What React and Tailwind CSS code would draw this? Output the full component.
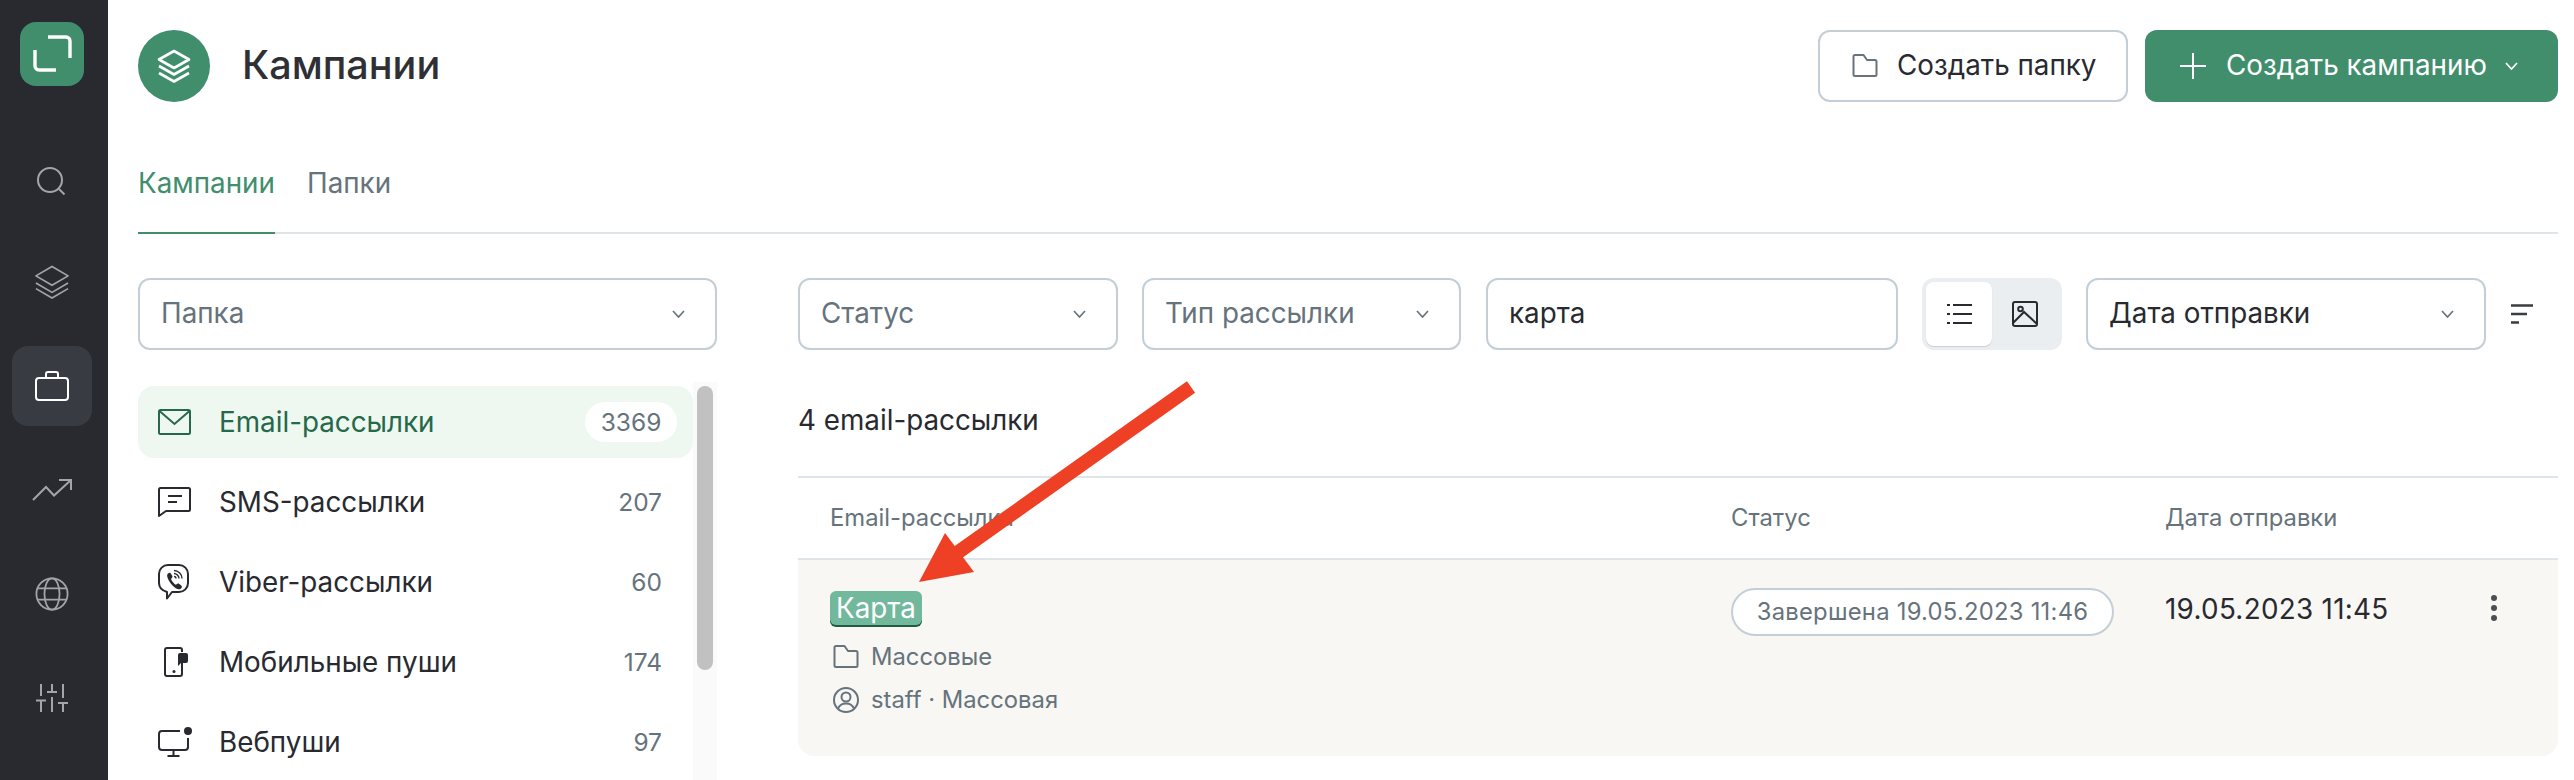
import React from "react";

const Chevron = ({ className = "text-[#66737c]" }) => (
  <svg width="13" height="8" viewBox="0 0 13 8" fill="none" stroke="currentColor" strokeWidth="1.700" className={className}>
    <path d="M1 1l5.500 6L12 1" />
  </svg>
);

const FolderIcon = ({ size = 26, className }) => (
  <svg width={size} height={size} viewBox="0 0 26 26" fill="none" stroke="currentColor" strokeWidth="2" strokeLinejoin="round" className={className}>
    <path d="M1.500 3.500a1.500 1.500 0 0 1 1.500-1.500h8.500l3.500 5h8a1.500 1.500 0 0 1 1.500 1.500v13a1.500 1.500 0 0 1-1.500 1.500H3a1.500 1.500 0 0 1-1.500-1.500z" />
  </svg>
);

const LayersBold = () => (
  <svg width="36" height="36" viewBox="0 0 36 36" fill="none" stroke="#fff" strokeWidth="2.600" strokeLinejoin="round">
    <path d="M18 3 33 11.500 18 20 3 11.500z" />
    <path d="M3 18l15 8.500L33 18" />
    <path d="M3 25l15 8.500L33 25" />
  </svg>
);

const NavSearch = () => (
  <svg width="30" height="30" viewBox="0 0 30 30" fill="none" stroke="currentColor" strokeWidth="2" className="mt-[4px]">
    <circle cx="13" cy="15" r="12" />
    <path d="M22 24l5.500 5.500" />
  </svg>
);
const NavLayers = () => (
  <svg width="36" height="34" viewBox="0 0 38 36" fill="none" stroke="currentColor" strokeWidth="1.800" strokeLinejoin="round">
    <path d="M19 1.500 36 11.500 19 21.500 2 11.500z" />
    <path d="M2 19l17 10 17-10" />
    <path d="M2 25l17 10 17-10" />
  </svg>
);
const NavBag = () => (
  <svg width="34" height="30" viewBox="0 0 34 30" fill="none" stroke="currentColor" strokeWidth="2">
    <rect x="1" y="7" width="32" height="22" rx="3" />
    <path d="M11 7V3a2 2 0 0 1 2-2h8a2 2 0 0 1 2 2v4" />
  </svg>
);
const NavTrend = () => (
  <svg width="40" height="24" viewBox="0 0 40 24" fill="none" stroke="currentColor" strokeWidth="2">
    <path d="M1 22 14 9l8 8.500L39 2" />
    <path d="M27 2h12v10" />
  </svg>
);
const NavGlobe = () => (
  <svg width="34" height="34" viewBox="0 0 36 36" fill="none" stroke="currentColor" strokeWidth="1.900">
    <circle cx="18" cy="18" r="16.500" />
    <ellipse cx="18" cy="18" rx="8" ry="16.500" />
    <path d="M3 12h30M3 24h30" />
  </svg>
);
const NavSliders = () => (
  <svg width="34" height="30" viewBox="0 0 34 30" fill="none" stroke="currentColor" strokeWidth="2">
    <path d="M6 1v12M1 17.500h10M6 17.500V29" />
    <path d="M17 1v8M12 9h10M17 14v15" />
    <path d="M28 1v14M23 20h10M28 20v9" />
  </svg>
);

const MailIcon = () => (
  <svg width="33" height="26" viewBox="0 0 33 26" fill="none" stroke="currentColor" strokeWidth="2">
    <rect x="1" y="1" width="31" height="24" rx="1.500" />
    <path d="M1.500 2 16.500 15 31.500 2" />
  </svg>
);
const SmsIcon = () => (
  <svg width="33" height="30" viewBox="0 0 33 30" fill="none" stroke="currentColor" strokeWidth="2" strokeLinejoin="round">
    <path d="M1 2.500A1.500 1.500 0 0 1 2.500 1h28A1.500 1.500 0 0 1 32 2.500v20a1.500 1.500 0 0 1-1.500 1.500H8L1 29z" />
    <path d="M10 9h14M10 15h9" />
  </svg>
);
const ViberIcon = () => (
  <svg width="32" height="36" viewBox="0 0 32 36" fill="none" stroke="currentColor" strokeWidth="2" strokeLinejoin="round">
    <path d="M10 1h11c5 0 9 4 9 9v9c0 5-4 9-9 9h-7l-5 6.500V28C4 26.500 1 23 1 19v-9c0-5 4-9 9-9z" />
    <path d="M10 9.500c1-1 2.300-1 2.900 0l1.400 2.500c.5 1 0 1.800-1 2.500-.5.500 0 1.500 1.500 3.500s3 3 3.500 2.500c1-1 2-1.300 3-.5l2 1.500c1 1 .5 2.500-.5 3.200-2 1.300-5 .5-8.500-3.500S7.500 11.500 10 9.500z" fill="currentColor" stroke="none" />
    <path d="M16 6.500c4 0 8 3.500 8 8M16 9.500c2.500 0 5 2.300 5 5M16 12.500c1 0 2 1 2 2" strokeWidth="1.400" />
  </svg>
);
const PushIcon = () => (
  <svg width="31" height="30" viewBox="0 0 31 30" fill="none" stroke="currentColor" strokeWidth="2">
    <path d="M24 5V3a2 2 0 0 0-2-2H9a2 2 0 0 0-2 2v24a2 2 0 0 0 2 2h13a2 2 0 0 0 2-2V16" />
    <circle cx="16" cy="24.500" r="1.500" fill="currentColor" stroke="none" />
    <path d="M20 8a2 2 0 0 1 2-2h6a2 2 0 0 1 2 2v6a2 2 0 0 1-2 2h-5l-3 3z" fill="currentColor" stroke="none" />
  </svg>
);
const WebPushIcon = () => (
  <svg width="35" height="30" viewBox="0 0 35 30" fill="none" stroke="currentColor" strokeWidth="2">
    <path d="M22 4H4a3 3 0 0 0-3 3v13a3 3 0 0 0 3 3h23a3 3 0 0 0 3-3V11" />
    <path d="M15.500 23v5M9.500 29h12" />
    <circle cx="30" cy="4" r="4" fill="currentColor" stroke="none" />
  </svg>
);

const Select = ({ label, className, dark }) => (
  <div className={`h-[72px] shrink-0 rounded-[12px] border-2 border-[#c3ced6] bg-white flex items-center justify-between pl-[21px] pr-[30px] ${className}`}>
    <span className={`text-[27.8px] leading-none ${dark ? "text-[#282a30]" : "text-[#66737c]"}`}>{label}</span>
    <Chevron />
  </div>
);

const channels = [
  { icon: <MailIcon />, label: "Email-рассылки", count: "3369", active: true },
  { icon: <SmsIcon />, label: "SMS-рассылки", count: "207" },
  { icon: <ViberIcon />, label: "Viber-рассылки", count: "60" },
  { icon: <PushIcon />, label: "Мобильные пуши", count: "174" },
  { icon: <WebPushIcon />, label: "Вебпуши", count: "97" },
];

const ChannelRow = ({ icon, label, count, active }) => (
  <div className={`h-[72px] mb-[8px] shrink-0 rounded-[16px] flex items-center pl-[20px] pr-[16px] ${active ? "bg-[#eef8f1] text-[#26694a]" : "text-[#282a30]"}`}>
    <span className="w-[35px] flex justify-start shrink-0">{icon}</span>
    <span className="ml-[26px] mt-[1px] text-[27.8px] leading-none">{label}</span>
    {active ? (
      <span className="ml-auto h-[40px] w-[92px] rounded-full bg-white flex items-center justify-center text-[24.500px] leading-none text-[#66737c]">{count}</span>
    ) : (
      <span className="ml-auto pr-[15px] text-[24.500px] leading-none text-[#66737c]">{count}</span>
    )}
  </div>
);

export default function App() {
  return (
    <div className="relative w-[2574px] h-[780px] overflow-hidden bg-white flex font-['Inter',sans-serif]">
      <aside className="w-[108px] shrink-0 bg-[#282a30] flex flex-col items-start text-[#a2a5aa]">
        <div className="mt-[22px] ml-[20px] w-[64px] h-[64px] rounded-[16px] bg-[#418e6d]">
          <svg width="64" height="64" viewBox="0 0 64 64" fill="none" stroke="#fff" strokeWidth="3.400">
            <path d="M28 15h18a4 4 0 0 1 4 4v17" />
            <path d="M15 28v16a4 4 0 0 0 4 4h17" />
          </svg>
        </div>
        <div className="mt-[52px] ml-[12px] flex flex-col gap-[24px]">
          <div className="w-[80px] h-[80px] flex items-center justify-center"><NavSearch /></div>
          <div className="w-[80px] h-[80px] flex items-center justify-center"><NavLayers /></div>
          <div className="w-[80px] h-[80px] flex items-center justify-center rounded-[16px] bg-[#383b42] text-white"><NavBag /></div>
          <div className="w-[80px] h-[80px] flex items-center justify-center"><NavTrend /></div>
          <div className="w-[80px] h-[80px] flex items-center justify-center"><NavGlobe /></div>
          <div className="w-[80px] h-[80px] flex items-center justify-center"><NavSliders /></div>
        </div>
      </aside>

      <main className="flex-1 min-w-0 pl-[30px] pr-[16px] pt-[30px] flex flex-col">
        <header className="h-[72px] flex items-center justify-between shrink-0">
          <div className="flex items-center">
            <div className="w-[72px] h-[72px] rounded-full bg-[#418e6d] flex items-center justify-center"><LayersBold /></div>
            <h1 className="ml-[32px] text-[39.600px] leading-none font-medium text-[#2f3034]">Кампании</h1>
          </div>
          <div className="flex gap-[17px]">
            <div className="h-[72px] w-[310px] rounded-[12px] border-2 border-[#c3ced6] bg-white flex items-center pl-[32px] text-[#282a30]">
              <FolderIcon className="text-[#66737c]" />
              <span className="ml-[19px] text-[27.8px] leading-none">Создать папку</span>
            </div>
            <div className="h-[72px] w-[413px] rounded-[12px] bg-[#418e6d] flex items-center pl-[35px] text-white">
              <svg width="26" height="26" viewBox="0 0 26 26" stroke="currentColor" strokeWidth="2"><path d="M13 0v26M0 13h26" /></svg>
              <span className="ml-[20px] text-[27.8px] leading-none">Создать кампанию</span>
              <Chevron className="ml-[18px] text-white" />
            </div>
          </div>
        </header>

        <nav className="mt-[46px] h-[86px] border-b-2 border-[#dfe4e8] flex shrink-0 gap-[32px]">
          <div className="h-[86px] w-[137px] border-b-2 border-[#418e6d] text-[#418e6d] text-[27.8px] leading-[70px]">Кампании</div>
          <div className="text-[#66737c] text-[27.8px] leading-[70px]">Папки</div>
        </nav>

        <div className="mt-[44px] flex flex-1 min-h-0">
          <section className="w-[579px] shrink-0 flex flex-col">
            <Select label="Папка" className="w-[579px]" />
            <div className="mt-[36px] flex flex-1 min-h-0">
              <div className="w-[555px] shrink-0 flex flex-col overflow-hidden">
                {channels.map((c) => <ChannelRow key={c.label} {...c} />)}
              </div>
              <div className="w-[24px] bg-[#fafafa] flex justify-center -mt-[4px] pt-[4px]">
                <div className="w-[16px] h-[284px] rounded-full bg-[#c1c1c1]" />
              </div>
            </div>
          </section>

          <section className="ml-[81px] flex-1 min-w-0 flex flex-col">
            <div className="flex items-center">
              <Select label="Статус" className="w-[320px]" />
              <Select label="Тип рассылки" className="w-[319px] ml-[24px]" />
              <div className="h-[72px] w-[412px] ml-[25px] rounded-[12px] border-2 border-[#c3ced6] flex items-center pl-[21px] text-[27.8px] leading-none text-[#282a30]">карта</div>
              <div className="h-[72px] w-[140px] ml-[24px] rounded-[12px] bg-[#ebeef0] flex items-center p-[4px]">
                <div className="w-[66px] h-[64px] rounded-[8px] bg-white shadow-[0_1px_1px_#c9cfd4] flex items-center justify-center text-[#282a30]">
                  <svg width="25" height="22" viewBox="0 0 25 22" fill="none" stroke="currentColor" strokeWidth="2">
                    <path d="M6 2h19M6 11h19M6 20h19M0 2h3M0 11h3M0 20h3" />
                  </svg>
                </div>
                <div className="w-[66px] h-[64px] flex items-center justify-center text-[#282a30]">
                  <svg width="26" height="26" viewBox="0 0 26 26" fill="none" stroke="currentColor" strokeWidth="2">
                    <rect x="1" y="1" width="24" height="24" rx="2" />
                    <circle cx="8.500" cy="8" r="2.300" />
                    <path d="M1 22 12 11l13 12" />
                  </svg>
                </div>
              </div>
              <Select label="Дата отправки" dark className="w-[400px] ml-[24px]" />
              <svg width="22" height="20" viewBox="0 0 22 20" fill="none" stroke="#3a3d42" strokeWidth="2.400" className="ml-[25px]">
                <path d="M0 1.500h22M0 10h16M0 18.500h8" />
              </svg>
            </div>

            <div className="mt-[57px] text-[27.8px] leading-none h-[28px] text-[#282a30]">4 email-рассылки</div>

            <div className="mt-[41px] h-[84px] border-y-2 border-[#dfe4e8] flex items-center text-[23.800px] leading-none text-[#66737c] shrink-0">
              <div className="w-[933px] pl-[32px]">Email-рассылка</div>
              <div className="w-[434px]">Статус</div>
              <div>Дата отправки</div>
            </div>

            <div className="h-[196px] rounded-b-[16px] bg-[#f8f7f4] flex shrink-0">
              <div className="w-[933px] pl-[32px] pt-[31px] flex flex-col items-start">
                <span className="h-[34px] px-[6px] rounded-[6px] bg-[#71b89d] text-white text-[27.8px] leading-[34px] shadow-[0_2px_0_#1f5c42]">Карта</span>
                <div className="mt-[18px] h-[28px] flex items-center text-[23.800px] leading-none text-[#66737c]">
                  <FolderIcon className="ml-[3px]" />
                  <span className="ml-[12px]">Массовые</span>
                </div>
                <div className="mt-[15px] h-[28px] flex items-center text-[23.800px] leading-none text-[#66737c]">
                  <svg width="26" height="26" viewBox="0 0 26 26" fill="none" stroke="currentColor" strokeWidth="2" className="ml-[3px]">
                    <circle cx="13" cy="13" r="12" />
                    <circle cx="13" cy="10" r="4.500" />
                    <path d="M5 21.500c1.500-3.500 4.500-5 8-5s6.500 1.500 8 5" />
                  </svg>
                  <span className="ml-[12px]">staff · Массовая</span>
                </div>
              </div>
              <div className="w-[434px] pt-[28px]">
                <span className="inline-flex h-[48px] w-[383px] items-center justify-center rounded-full border-2 border-[#c3ced6] bg-white text-[23.800px] leading-none tracking-[0.25px] text-[#66737c]">Завершена 19.05.2023 11:46</span>
              </div>
              <div className="pt-[35px] text-[27.8px] leading-[28px] tracking-[0.3px] text-[#282a30]">19.05.2023 11:45</div>
              <div className="ml-auto mr-[61px] pt-[35px]">
                <svg width="6" height="26" viewBox="0 0 6 26" fill="#4b4f55">
                  <circle cx="3" cy="3" r="3" /><circle cx="3" cy="13" r="3" /><circle cx="3" cy="23" r="3" />
                </svg>
              </div>
            </div>
          </section>
        </div>
      </main>

      <svg width="2574" height="780" viewBox="0 0 2574 780" className="absolute left-0 top-0 pointer-events-none">
        <path d="M1191 387 957 553" stroke="#ee4025" strokeWidth="14" fill="none" />
        <path d="M919 582 945 533 974 572z" fill="#ee4025" />
      </svg>
    </div>
  );
}
